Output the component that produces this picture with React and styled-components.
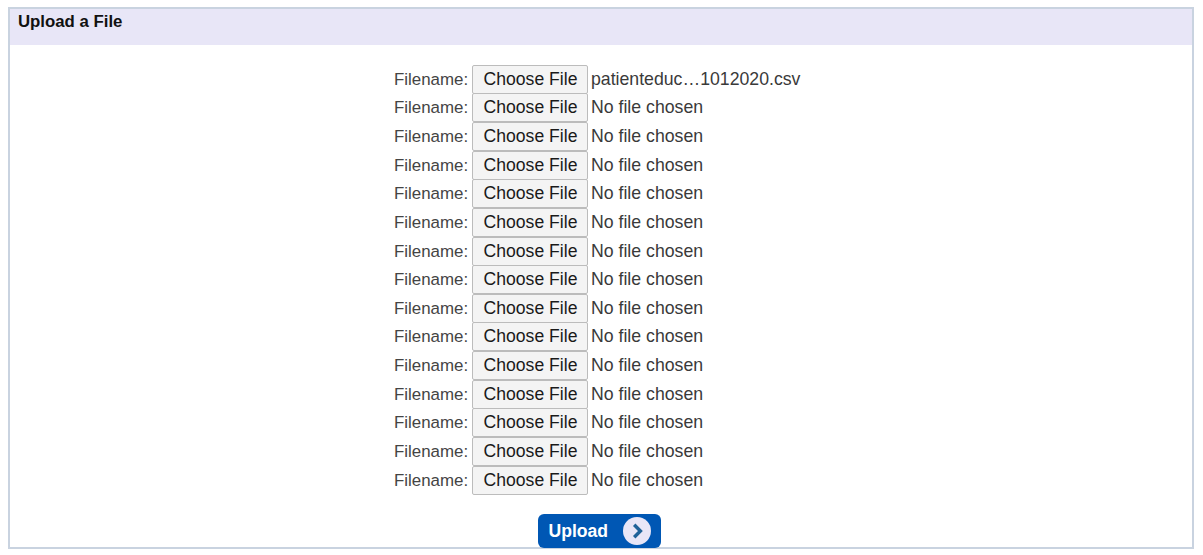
import styled, { createGlobalStyle } from 'styled-components';

const GlobalStyle = createGlobalStyle`
  html, body {
    margin: 0;
    padding: 0;
    background: #ffffff;
  }
  body {
    font-family: "Liberation Sans", Arial, sans-serif;
  }
`;

const files = [
  'patienteduc…1012020.csv',
  ...Array(14).fill('No file chosen'),
];

const App = () => {
  return (
    <Page>
      <GlobalStyle />
      <Panel>
        <PanelHeader>Upload a File</PanelHeader>
        <UploadForm>
          <FileList>
            {files.map((name, i) => (
              <FileRow key={i}>
                <FileLabel>Filename:</FileLabel>
                <ChooseButton type="button">Choose File</ChooseButton>
                <FileName>{name}</FileName>
              </FileRow>
            ))}
          </FileList>
          <UploadButton type="button">
            Upload
            <ArrowBadge>
              <svg width="16" height="16" viewBox="0 0 16 16" fill="none">
                <path d="M5.2 1.8 11.4 8l-6.2 6.2" stroke="#1f6299" strokeWidth="3.4" />
              </svg>
            </ArrowBadge>
          </UploadButton>
        </UploadForm>
      </Panel>
    </Page>
  );
};

export default App;

const Page = styled.div`
  width: 1203px;
  height: 555px;
  padding: 7px 9px 6px 8px;
  box-sizing: border-box;
  overflow: hidden;
`;

const Panel = styled.section`
  height: 542px;
  box-sizing: border-box;
  border: 2px solid #c9d3e0;
  background: #ffffff;
`;

const PanelHeader = styled.h2`
  height: 36px;
  margin: 0;
  padding: 4px 8px 0;
  box-sizing: border-box;
  background: #e8e6f7;
  font-size: 16.8px;
  line-height: 18px;
  font-weight: 700;
  color: #111111;
`;

const UploadForm = styled.form`
  display: flex;
  flex-direction: column;
  align-items: center;
  padding-top: 20px;
`;

const FileList = styled.div`
  display: flex;
  flex-direction: column;
  align-self: flex-start;
  margin-left: 384px;
`;

const FileRow = styled.div`
  display: flex;
  align-items: center;
  height: 28.64px;
`;

const FileLabel = styled.span`
  width: 78px;
  padding-top: 1px;
  font-size: 16.9px;
  color: #444444;
`;

const ChooseButton = styled.button`
  width: 116px;
  height: 29px;
  flex: none;
  padding: 0 0 0 1px;
  box-sizing: border-box;
  border: 1px solid #bcbcbc;
  border-radius: 2px;
  background: #f4f4f4;
  font-family: inherit;
  font-size: 17.6px;
  color: #1a1a1a;
`;

const FileName = styled.span`
  margin-left: 3px;
  font-size: 17.7px;
  color: #3a3a3a;
  white-space: nowrap;
`;

const UploadButton = styled.button`
  display: flex;
  align-items: center;
  justify-content: space-between;
  width: 123px;
  height: 34px;
  margin: 20px 4px 0 0;
  padding: 0 10px 0 11px;
  box-sizing: border-box;
  border: none;
  border-radius: 6px;
  background: #0057b4;
  font-family: inherit;
  font-size: 17.6px;
  font-weight: 700;
  color: #ffffff;
`;

const ArrowBadge = styled.span`
  display: flex;
  align-items: center;
  justify-content: center;
  width: 28px;
  height: 28px;
  border-radius: 50%;
  background: #e8e6f7;
`;
